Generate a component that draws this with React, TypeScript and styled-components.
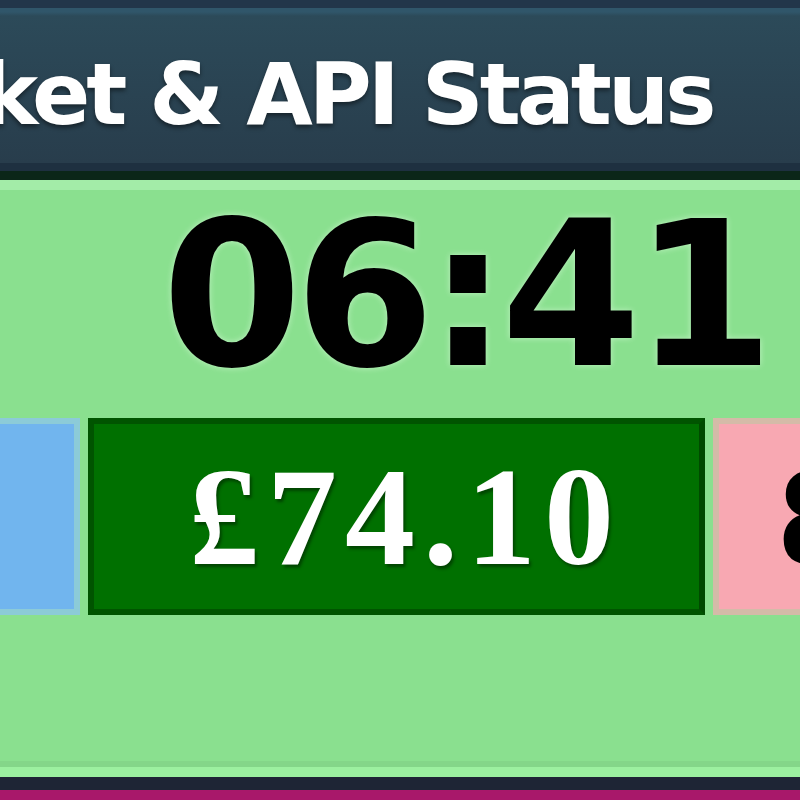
import React from "react";
import styled, { createGlobalStyle } from "styled-components";

interface priceBox {
  tone: "blue" | "green" | "pink";
  value: string;
}

const boxes: priceBox[] = [
  { tone: "blue", value: "£71.85" },
  { tone: "green", value: "£74.10" },
  { tone: "pink", value: "85.70%" },
];

const tones = {
  blue: { bg: "#71b5ee", border: "#8ccbd8", color: "#2a4a70" },
  green: { bg: "#007000", border: "#005400", color: "#ffffff" },
  pink: { bg: "#f8a8b2", border: "#d4bba8", color: "#000000" },
};

function App() {
  return (
    <>
      <GlobalStyle />
      <Page>
        <Widget>
          <Header>
            <Title>Market &amp; API Status</Title>
          </Header>
          <Body>
            <Clock>06:41</Clock>
            <PriceRow>
              {boxes.map((box, index) => (
                <PriceBox key={index} tone={box.tone}>
                  {box.value}
                </PriceBox>
              ))}
            </PriceRow>
          </Body>
          <NextPanel />
        </Widget>
      </Page>
    </>
  );
}

export default App;

const GlobalStyle = createGlobalStyle`
  html, body {
    margin: 0;
    padding: 0;
    overflow: hidden;
    background: #8ae08f;
  }
`;

const Page = styled.div`
  width: 800px;
  height: 800px;
  overflow: hidden;
`;

// the crop only shows the middle of the widget, so it starts off-screen
const Widget = styled.div`
  width: 1360px;
  height: 800px;
  margin-left: -560px;
  display: flex;
  flex-direction: column;
`;

const Header = styled.div`
  box-sizing: border-box;
  height: 180px;
  padding: 50px 0 0 367px;
  background: linear-gradient(
    to bottom,
    #22364a 0,
    #22364a 8px,
    #30566a 8px,
    #30566a 12px,
    #2c4a59 16px,
    #283d4c 163px,
    #1e3040 163px,
    #1e3040 171px,
    #0b2618 171px
  );
`;

const Title = styled.div`
  font-family: "DejaVu Sans", Verdana, sans-serif;
  font-weight: bold;
  font-size: 86px;
  line-height: 88px;
  letter-spacing: -4px;
  color: #ffffff;
  white-space: nowrap;
  text-shadow: 0 3px 4px rgba(0, 0, 0, 0.45);
`;

const Body = styled.div`
  box-sizing: border-box;
  height: 597px;
  padding: 3px 0 0;
  background: #8ae08f;
  border-top: 10px solid #a3eca8;
  border-bottom: 10px solid #9cf0a0;
  box-shadow: inset 0 -6px 0 #84d689;
  display: flex;
  flex-direction: column;
  gap: 20px;
`;

const Clock = styled.div`
  padding-left: 722px;
  font-family: "DejaVu Sans", Verdana, sans-serif;
  font-weight: bold;
  font-size: 201px;
  line-height: 205px;
  letter-spacing: -7px;
  color: #000000;
  white-space: nowrap;
  text-shadow: 0 0 6px rgba(230, 255, 230, 0.6);
`;

const PriceRow = styled.div`
  display: flex;
  gap: 8px;
  padding-left: 23px;
`;

const PriceBox = styled.div<{ tone: "blue" | "green" | "pink" }>`
  box-sizing: border-box;
  flex: 0 0 617px;
  height: 197px;
  display: flex;
  align-items: center;
  justify-content: center;
  padding-left: 18px;
  background: ${(props) => tones[props.tone].bg};
  border: 6px solid ${(props) => tones[props.tone].border};
  border-right-color: ${(props) =>
    props.tone === "green" ? "#004a00" : tones[props.tone].border};
  color: ${(props) => tones[props.tone].color};
  font-family: "Liberation Serif", "Times New Roman", serif;
  font-weight: bold;
  font-size: 140px;
  letter-spacing: 8px;
  white-space: nowrap;
  text-shadow: ${(props) =>
    props.tone === "green" ? "2px 3px 3px rgba(0, 40, 0, 0.6)" : "none"};
`;

const NextPanel = styled.div`
  flex: 1;
  background: #a8186a;
  border-top: 13px solid #1e2535;
`;
